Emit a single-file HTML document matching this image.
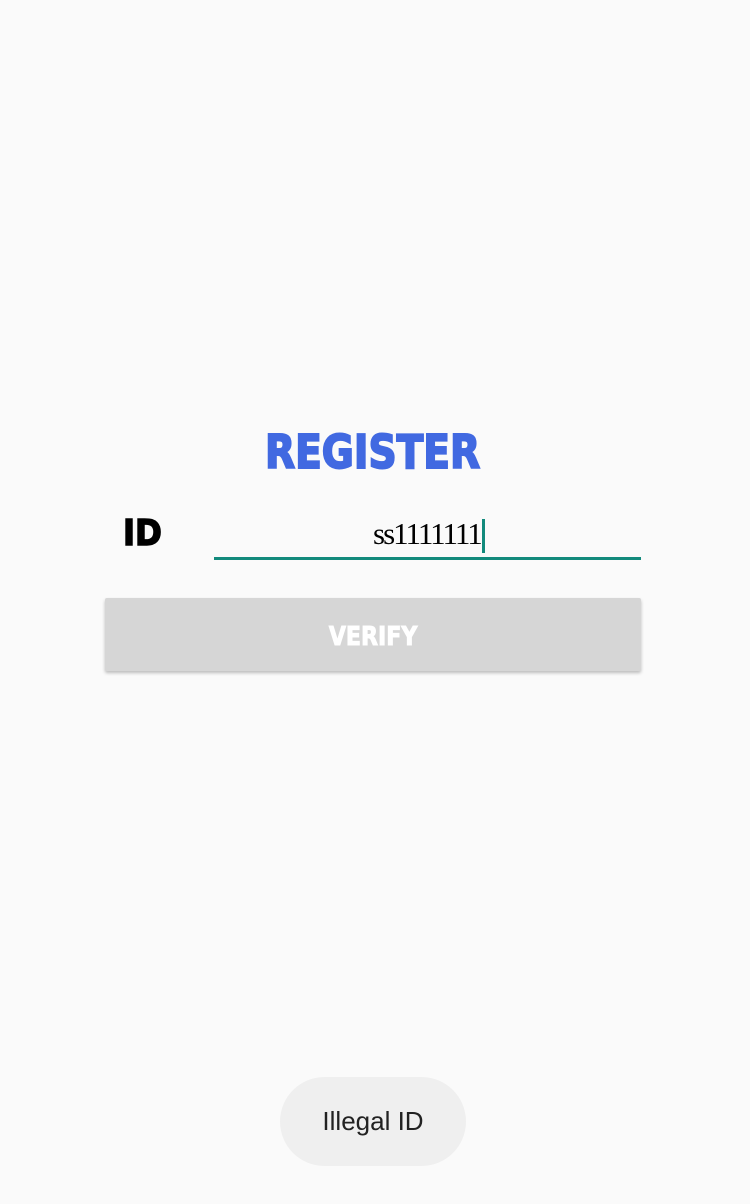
<!DOCTYPE html>
<html><head><meta charset="utf-8"><style>
body{margin:0;width:750px;height:1204px;background:#fafafa;position:relative;overflow:hidden;font-family:"Liberation Sans",sans-serif}
.a{position:absolute}
.disp{font-family:"DejaVu Sans","Liberation Sans",sans-serif;font-weight:bold;white-space:nowrap}
</style></head><body>
<div class="a disp" style="left:173px;top:427px;width:400px;height:50px;color:#4169e1;font-size:46px;line-height:50px;text-align:center;"><span style="display:inline-block;transform:scaleX(0.85);transform-origin:center;-webkit-text-stroke:2px #4169e1">REGISTER</span></div>
<div class="a disp" style="left:123px;top:514px;font-size:36px;line-height:40px;color:#000;"><span style="display:inline-block;transform:scaleX(0.9);transform-origin:left;-webkit-text-stroke:1.5px #000">ID</span></div>
<div class="a" style="left:373px;top:514px;font-family:'Liberation Serif',serif;font-size:31px;line-height:40px;color:#000;letter-spacing:-2px">ss1111111</div>
<div class="a" style="left:482px;top:519px;width:3px;height:34px;background:#128a7c"></div>
<div class="a" style="left:214px;top:557px;width:427px;height:3px;background:#128a7c"></div>
<div class="a" style="left:105px;top:598px;width:536px;height:73px;background:#d6d6d6;border-radius:2px;box-shadow:0 2px 3px rgba(0,0,0,0.25)"></div>
<div class="a disp" style="left:105px;top:620px;width:536px;text-align:center;color:#fff;font-size:26px;line-height:34px;"><span style="display:inline-block;transform:scaleX(0.85);-webkit-text-stroke:1px #fff">VERIFY</span></div>
<div class="a" style="left:280px;top:1077px;width:186px;height:89px;border-radius:45px;background:#efefef;text-align:center;line-height:89px;font-size:26px;color:#222">Illegal ID</div>
</body></html>
